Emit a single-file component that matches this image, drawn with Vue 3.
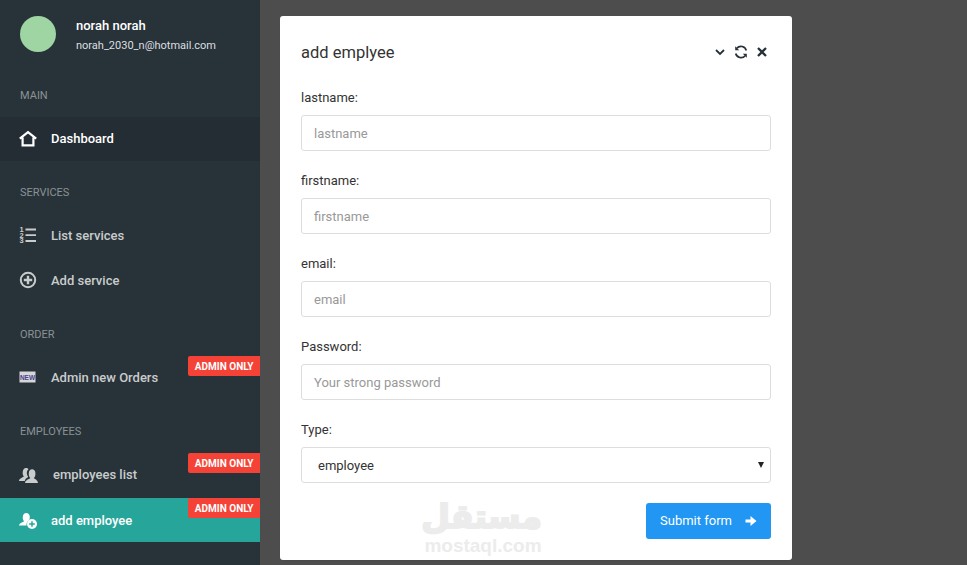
<script setup>
const sections = [
  { title: 'MAIN', items: [{ icon: 'home', label: 'Dashboard', current: true }] },
  { title: 'SERVICES', items: [{ icon: 'list', label: 'List services' }, { icon: 'plus', label: 'Add service' }] },
  { title: 'ORDER', items: [{ icon: 'new', label: 'Admin new Orders', badge: true }] },
  { title: 'EMPLOYEES', items: [
    { icon: 'users', label: 'employees list', badge: true, wide: true },
    { icon: 'useradd', label: 'add employee', badge: true, active: true }
  ] }
]
const fields = [
  { label: 'lastname:', placeholder: 'lastname', type: 'text' },
  { label: 'firstname:', placeholder: 'firstname', type: 'text' },
  { label: 'email:', placeholder: 'email', type: 'email' },
  { label: 'Password:', placeholder: 'Your strong password', type: 'password' }
]
</script>

<template>
  <div class="page">
    <aside class="sidebar">
      <div class="user">
        <div class="avatar"></div>
        <div class="user-text">
          <div class="user-name">norah norah</div>
          <div class="user-mail">norah_2030_n@hotmail.com</div>
        </div>
      </div>
      <nav>
        <section v-for="s in sections" :key="s.title" class="section">
          <div class="section-title">{{ s.title }}</div>
          <a
            v-for="item in s.items"
            :key="item.label"
            class="row"
            :class="{ current: item.current, active: item.active }"
          >
            <svg class="ico" viewBox="0 0 18 18" width="18" height="18" aria-hidden="true">
              <template v-if="item.icon === 'home'">
                <path d="M.8 8.600 9 2.200l8.200 6.400M3.600 7.400v7.900h10.800V7.400" fill="none" stroke="currentColor" stroke-width="2.200" />
              </template>
              <template v-else-if="item.icon === 'list'">
                <text x="0.500" y="6" class="tiny">1</text>
                <text x="0.500" y="11.500" class="tiny">2</text>
                <text x="0.500" y="17" class="tiny">3</text>
                <path d="M6.500 3.500H17M6.500 9.200H17M6.500 15H17" stroke="currentColor" stroke-width="1.800" fill="none" />
              </template>
              <template v-else-if="item.icon === 'plus'">
                <circle cx="9" cy="9" r="7.200" fill="none" stroke="currentColor" stroke-width="2" />
                <path d="M9 4.800v8.400M4.800 9h8.400" stroke="currentColor" stroke-width="2.400" />
              </template>
              <template v-else-if="item.icon === 'new'">
                <rect x="0.500" y="3.500" width="16" height="11" fill="#d5d6d8" />
                <text x="8.500" y="11.700" text-anchor="middle" class="newtxt">NEW</text>
              </template>
              <template v-else-if="item.icon === 'users'">
                <path d="M0 16c.3-2.600 3.400-3.200 4.800-4.400-.9-1.300-1.300-2.900-1.100-4.600C4 4.400 5.200 3 7 3c1.100 0 2 .5 2.500 1.300-1.500 1-2 3-1.500 5.200.3 1 .8 1.800 1.200 2.400C7.700 12.800 6.300 13.700 5.700 16z" fill="currentColor" />
                <path d="M6 18c.3-3 4-3.600 5.400-4.900-1.200-1.300-1.800-3.100-1.600-5.200.2-2.200 1.500-3.600 3.300-3.600s3.100 1.400 3.300 3.600c.2 2.100-.4 3.900-1.600 5.200 1.400 1.300 3.800 1.900 4.200 4.900z" fill="currentColor" />
              </template>
              <template v-else>
                <path d="M0 14.500c.5-2.500 3.800-3 5-4.200C4 9 3.600 7.500 3.800 5.800 4 3.600 5.300 2 7.300 2s3.300 1.600 3.500 3.800c.1 1.300-.1 2.500-.7 3.500-1.800 1-2.800 3-2.600 5.200z" fill="currentColor" />
                <circle cx="13" cy="13" r="5" fill="currentColor" />
                <path d="M13 10.200v5.600M10.200 13h5.600" stroke="#26a69a" stroke-width="1.500" />
              </template>
            </svg>
            <span class="row-label" :class="{ wide: item.wide }">{{ item.label }}</span>
            <span v-if="item.badge" class="badge">ADMIN ONLY</span>
          </a>
        </section>
      </nav>
    </aside>

    <main class="content">
      <form class="card" @submit.prevent>
        <header class="card-head">
          <h2>add emplyee</h2>
          <div class="tools">
            <svg viewBox="0 0 12 12" width="12" height="12" aria-hidden="true"><path d="M2 4l4 4 4-4" fill="none" stroke="#263238" stroke-width="1.800" /></svg>
            <svg viewBox="0 0 14 14" width="14" height="14" aria-hidden="true">
              <path d="M12.300 5.500A5.500 5.500 0 0 0 2.800 3.300M1.700 8.500a5.500 5.500 0 0 0 9.500 2.200" fill="none" stroke="#263238" stroke-width="1.700" />
              <path d="M1.200 1.200v4h4zM12.800 12.800v-4h-4z" fill="#263238" />
            </svg>
            <svg viewBox="0 0 12 12" width="12" height="12" aria-hidden="true"><path d="M2 2l8 8M10 2l-8 8" fill="none" stroke="#263238" stroke-width="2.300" /></svg>
          </div>
        </header>
        <div v-for="f in fields" :key="f.label" class="group">
          <label>{{ f.label }}</label>
          <input class="control" :type="f.type" :placeholder="f.placeholder" />
        </div>
        <div class="group">
          <label>Type:</label>
          <div class="select-wrap">
            <select class="control select">
              <option>employee</option>
            </select>
          </div>
        </div>
        <div class="actions">
          <button type="submit" class="submit">
            <span class="submit-text">Submit form</span>
            <svg viewBox="0 0 12 12" width="12" height="12" aria-hidden="true"><path d="M0.500 4.500h5V1L11.500 6l-6 5V7.500h-5z" fill="#fff" /></svg>
          </button>
        </div>
        <div class="watermark">
          <div class="wm-ar" dir="rtl">مستقل</div>
          <div class="wm-en">mostaql.com</div>
        </div>
      </form>
    </main>
  </div>
</template>

<style>
html, body { margin: 0; background: #4d4d4d; }
</style>

<style scoped>
.page {
  display: flex;
  height: 565px;
  overflow: hidden;
  background: #4d4d4d;
  font-family: Roboto, "Liberation Sans", sans-serif;
  font-size: 13px;
  color: #333;
}
.sidebar {
  width: 260px;
  flex: none;
  background: #283339;
  color: #fff;
}
.user {
  display: flex;
  gap: 20px;
  padding: 16px 20px 0;
  height: 70px;
  box-sizing: border-box;
}
.avatar {
  width: 36px;
  height: 36px;
  border-radius: 50%;
  background: #9fd4a3;
}
.user-name {
  font-size: 13px;
  font-weight: 500;
  line-height: 20px;
  color: #fff;
}
.user-mail {
  font-size: 11px;
  line-height: 18px;
  margin-top: 1px;
  color: #dcdfe0;
}
.section-title {
  height: 47px;
  box-sizing: border-box;
  padding: 17px 20px 0;
  font-size: 11px;
  line-height: 18px;
  color: #8b9296;
}
.section + .section .section-title { height: 52px; padding-top: 23px; }
.section:nth-child(n+3) .section-title { height: 53px; padding-top: 24px; }
.row {
  position: relative;
  display: flex;
  align-items: center;
  height: 44px;
  padding-left: 19px;
  font-size: 13px;
  font-weight: 500;
  color: #c9cccd;
}
.row + .row { margin-top: 1px; }
.section:last-child .row + .row { margin-top: 2px; }
.row.current { background: #232d33; color: #fff; }
.row.current .row-label { margin-bottom: 2px; }
.row.active { background: #26a69a; color: #fff; }
.ico { flex: none; color: inherit; overflow: visible; }
.tiny { font: 700 7.500px "Liberation Sans", sans-serif; fill: currentColor; }
.newtxt { font: 700 6.500px "Liberation Sans", sans-serif; fill: #4b3f8f; }
.row-label { margin-left: 14px; }
.row-label.wide { margin-left: 16px; }
.badge {
  position: absolute;
  top: 1px;
  right: 0;
  height: 20px;
  padding: 0 6.500px;
  line-height: 21px;
  background: #f44336;
  border-radius: 2px 0 0 2px;
  color: #fff;
  font-size: 10px;
  font-weight: 700;
}
.row.active .badge { top: 0; }
.content {
  flex: 1;
  padding: 16px 0 0 20px;
}
.card {
  position: relative;
  box-sizing: border-box;
  width: 512px;
  height: 544px;
  background: #fff;
  border-radius: 3px;
  padding: 0 21px;
  box-shadow: 0 1px 1px rgba(0, 0, 0, .05);
}
.card-head {
  display: flex;
  align-items: center;
  justify-content: space-between;
  height: 72px;
}
h2 {
  margin: 0;
  font-size: 16.500px;
  font-weight: 400;
  color: #333;
}
.tools {
  display: flex;
  align-items: center;
  gap: 8px;
  margin-right: 3px;
}
.group {
  margin-bottom: 20px;
}
.group label {
  display: block;
  height: 27px;
  line-height: 20px;
  font-size: 13px;
  color: #333;
}
.control {
  display: block;
  box-sizing: border-box;
  width: 100%;
  height: 36px;
  border: 1px solid #ddd;
  border-radius: 3px;
  padding: 0 12px;
  font: 13px Roboto, "Liberation Sans", sans-serif;
  color: #333;
  background: #fff;
  outline: none;
}
.control::placeholder { color: #999; opacity: 1; }
.select-wrap { position: relative; }
.select-wrap::after {
  content: "";
  position: absolute;
  right: 7px;
  top: 15px;
  border-left: 3px solid transparent;
  border-right: 3px solid transparent;
  border-top: 6px solid #222;
  pointer-events: none;
}
.select {
  appearance: none;
  padding-left: 16px;
}
.actions {
  display: flex;
  justify-content: flex-end;
}
.submit {
  display: flex;
  align-items: center;
  justify-content: center;
  gap: 13px;
  width: 125px;
  height: 36px;
  border: 0;
  border-radius: 3px;
  background: #2196f3;
  color: #fff;
  font: 13px Roboto, "Liberation Sans", sans-serif;
}
.submit-text { margin-bottom: 2px; }
.watermark {
  position: absolute;
  left: 144px;
  top: 482px;
  width: 118px;
  text-align: center;
  color: #ececec;
  pointer-events: none;
}
.wm-ar {
  font: 700 33px/38px "DejaVu Sans", sans-serif;
  -webkit-text-stroke: 2px #ececec;
  white-space: nowrap;
}
.wm-en {
  font: 700 19px/19px "Liberation Sans", sans-serif;
}
</style>
